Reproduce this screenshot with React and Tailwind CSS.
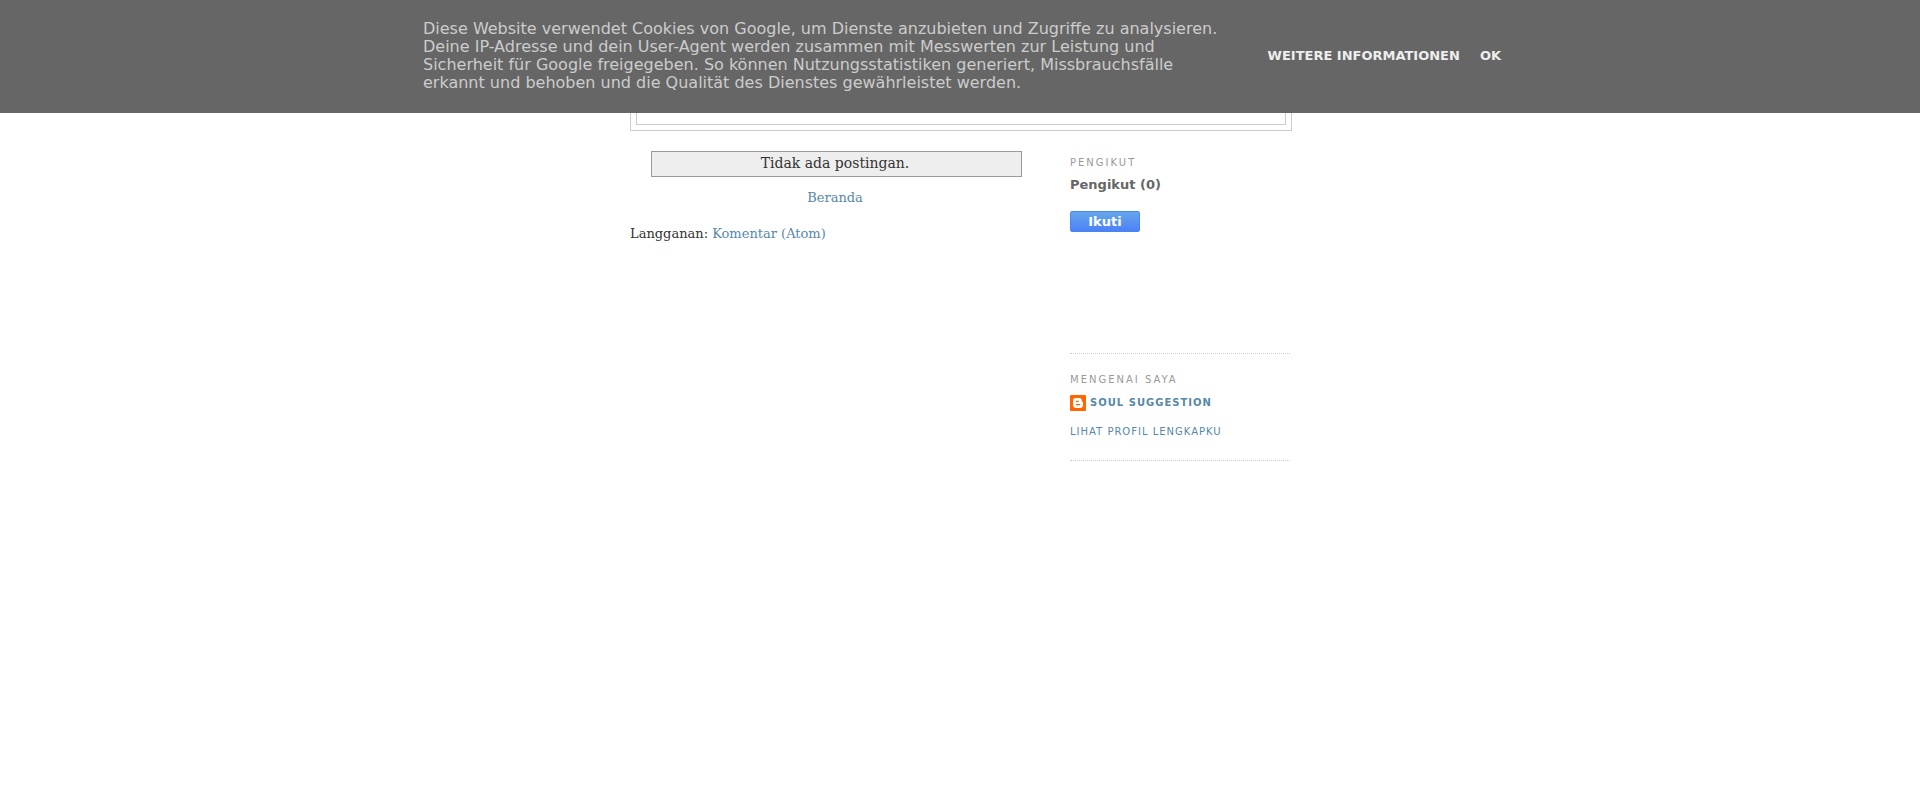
function CookieBar() {
  return (
    <div className="fixed inset-x-0 top-0 z-10 bg-[#666] pt-5 pb-[21px] font-['DejaVu_Sans',sans-serif]">
      <div className="mx-auto flex max-w-[1082px] items-center justify-between pl-1">
        <p className="max-w-[804px] text-base leading-[18px] text-[#ccc]">
          Diese Website verwendet Cookies von Google, um Dienste anzubieten und Zugriffe zu
          analysieren. Deine IP-Adresse und dein User-Agent werden zusammen mit Messwerten zur
          Leistung und Sicherheit für Google freigegeben. So können Nutzungsstatistiken generiert,
          Missbrauchsfälle erkannt und behoben und die Qualität des Dienstes gewährleistet werden.
        </p>
        <div className="flex gap-5 text-[13px] leading-4 font-bold whitespace-nowrap text-[#eee]">
          <a href="#info">WEITERE INFORMATIONEN</a>
          <button type="button">OK</button>
        </div>
      </div>
    </div>
  );
}

function BloggerIcon() {
  return (
    <svg className="size-4 shrink-0" viewBox="0 0 16 16" aria-hidden="true">
      <rect width="16" height="16" rx="1" fill="#f60" />
      <path
        fill="#fff"
        fillRule="evenodd"
        d="M6.2 3h2.6a3.2 3.2 0 0 1 3.2 3.2c0 .6.2.8.6.8.3 0 .4.2.4.5v2.3a3.2 3.2 0 0 1-3.2 3.2H6.2A3.2 3.2 0 0 1 3 9.800V6.200A3.200 3.200 0 0 1 6.200 3Zm.2 2.700a.6.6 0 0 0 0 1.200h1.900a.6.6 0 0 0 0-1.200Zm0 3.300a.6.6 0 0 0 0 1.200h3.400a.6.6 0 0 0 0-1.200Z"
      />
    </svg>
  );
}

function Widget({ title, className, children }) {
  return (
    <section className={`border-b border-dotted border-[#ccc] ${className}`}>
      <h2 className="text-[10px] leading-4 tracking-[2px] text-[#999] uppercase">{title}</h2>
      {children}
    </section>
  );
}

export default function App() {
  return (
    <div className="min-h-screen bg-white font-['DejaVu_Serif',serif] text-[13px] leading-5 text-[#333]">
      <CookieBar />
      <div className="mx-auto max-w-[660px] pt-[10px]">
        <header className="-mr-0.5 border border-[#ccc] p-[5px]">
          <div className="h-[109px] border border-[#ccc]" />
        </header>
        <div className="flex justify-between pt-5">
          <main className="w-[410px]">
            <div className="mr-[18px] ml-[21px] border border-[#999] bg-[#eee] pt-px pr-[3px] pb-[3px] text-center text-sm leading-5">
              Tidak ada postingan.
            </div>
            <div className="mt-[11px] text-center">
              <a href="#home" className="text-[#58a]">Beranda</a>
            </div>
            <div className="mt-4">
              Langganan:{' '}
              <a href="#comments" className="text-[#58a]">Komentar (Atom)</a>
            </div>
          </main>
          <aside className="w-[220px] pt-1 font-['DejaVu_Sans',sans-serif]">
            <Widget title="Pengikut" className="pb-[121px]">
              <p className="mt-[5px] text-[13px] leading-[18px] font-bold text-[#666]">Pengikut (0)</p>
              <button
                type="button"
                className="mt-[17px] block h-[21px] w-[70px] rounded-xs border border-[#4787ed] bg-linear-to-b from-[#66a6ea] to-[#4d80f8] text-[13px] leading-[19px] font-bold text-white"
              >
                Ikuti
              </button>
            </Widget>
            <Widget title="Mengenai Saya" className="mt-[18px] pb-5">
              <a
                href="#profile"
                className="mt-[7px] flex gap-1 text-[10px] leading-4 font-bold tracking-[1px] text-[#58a] uppercase"
              >
                <BloggerIcon />
                Soul Suggestion
              </a>
              <a
                href="#full-profile"
                className="mt-[13px] block text-[10px] leading-4 tracking-[1px] text-[#58a] uppercase"
              >
                Lihat profil lengkapku
              </a>
            </Widget>
          </aside>
        </div>
      </div>
    </div>
  );
}
